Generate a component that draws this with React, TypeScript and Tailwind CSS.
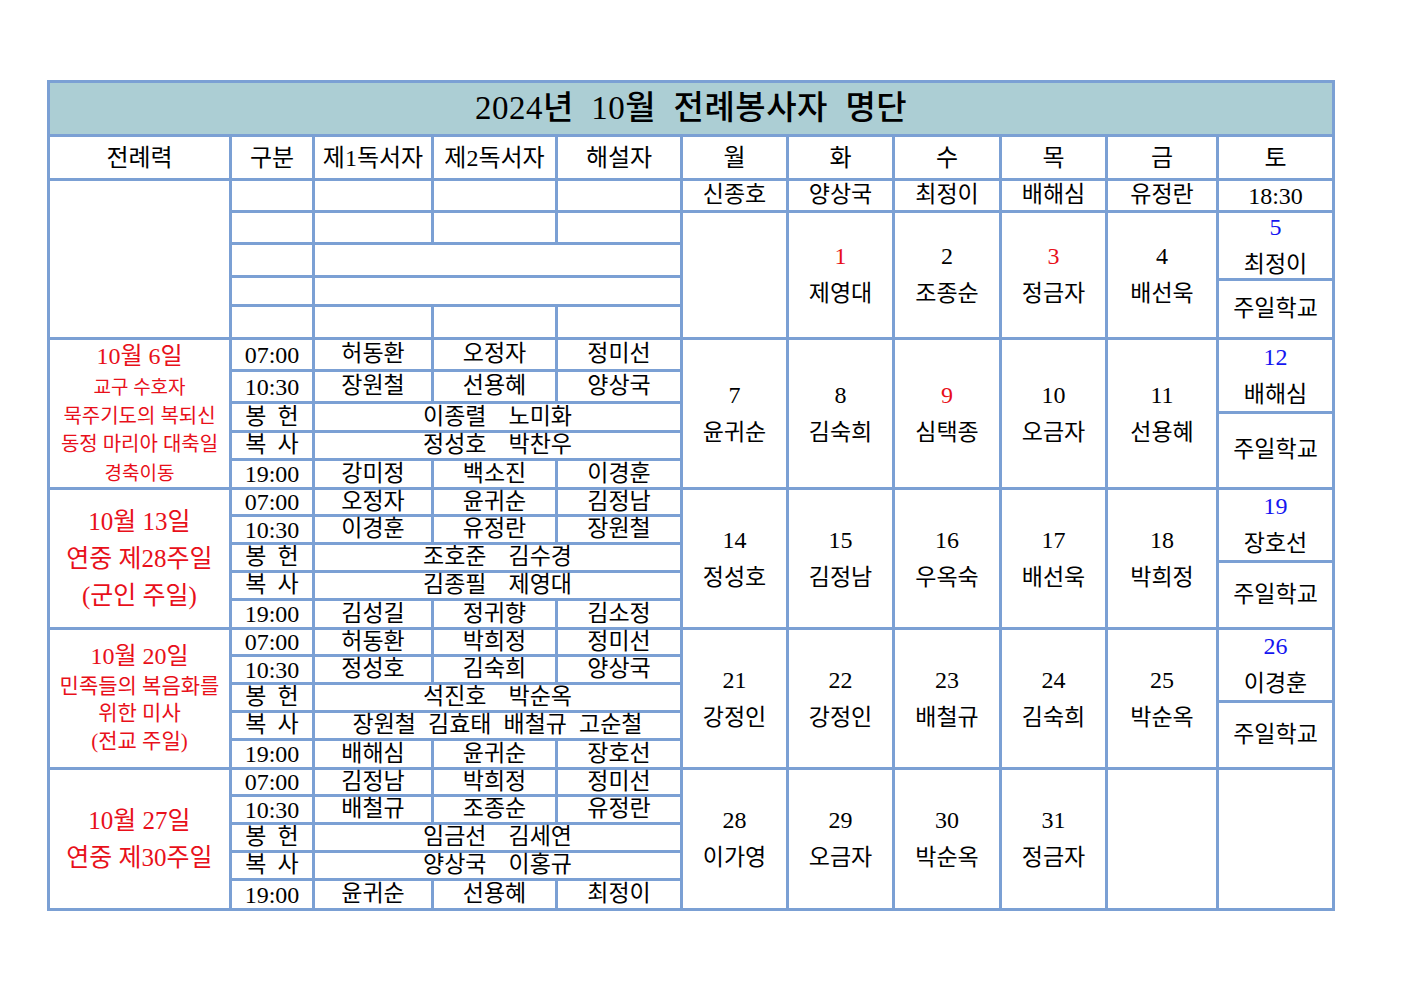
import type { ReactNode } from 'react';
import clsx from 'clsx';

type Day = { n?: string; name?: string; red?: boolean };

interface Section {
  label: ReactNode;
  rows: [string, string, string, string][];
  offer: string[];
  serve: string[];
  evening: [string, string, string];
  days: Day[];
  sat?: { n: string; name: string; topClass: string };
}

const RED = 'text-[#e8101a]';

function Cell({ className, children }: { className?: string; children?: ReactNode }) {
  return (
    <div className={clsx('bg-white flex items-center justify-center whitespace-nowrap', className)}>
      {children}
    </div>
  );
}

function DayCell({ day, span }: { day: Day; span: string }) {
  return (
    <Cell className={clsx(span, 'flex-col')}>
      {day.n && (
        <div className={clsx('text-[24px] leading-[37px]', day.red && RED)}>{day.n}</div>
      )}
      {day.name && <div className="text-[23px] leading-[37px]">{day.name}</div>}
    </Cell>
  );
}

function SatCell({ n, name, topClass, span }: { n: string; name: string; topClass: string; span: string }) {
  return (
    <div className={clsx(span, 'flex flex-col gap-[3px]')}>
      <Cell className={clsx(topClass, 'flex-col')}>
        <div className="text-[24px] leading-[37px] text-[#1515f0]">{n}</div>
        <div className="text-[23px] leading-[37px]">{name}</div>
      </Cell>
      <Cell className="flex-1 text-[23px]">주일학교</Cell>
    </div>
  );
}

const sections: Section[] = [
  {
    label: (
      <>
        <div className="text-[24px] leading-[36px]">10월 6일</div>
        <div className="text-[19px] leading-[28px]">교구 수호자</div>
        <div className="text-[20px] leading-[28px]">묵주기도의 복되신</div>
        <div className="text-[20px] leading-[28px]">동정 마리아 대축일</div>
        <div className="text-[19px] leading-[32px]">경축이동</div>
      </>
    ),
    rows: [
      ['07:00', '허동환', '오정자', '정미선'],
      ['10:30', '장원철', '선용혜', '양상국'],
    ],
    offer: ['이종렬', '노미화'],
    serve: ['정성호', '박찬우'],
    evening: ['강미정', '백소진', '이경훈'],
    days: [
      { n: '7', name: '윤귀순' },
      { n: '8', name: '김숙희' },
      { n: '9', name: '심택종', red: true },
      { n: '10', name: '오금자' },
      { n: '11', name: '선용혜' },
    ],
    sat: { n: '12', name: '배해심', topClass: 'h-[71px]' },
  },
  {
    label: (
      <>
        <div className="text-[25px] leading-[37px]">10월 13일</div>
        <div className="text-[25px] leading-[37px]">연중 제28주일</div>
        <div className="text-[25px] leading-[37px]">(군인 주일)</div>
      </>
    ),
    rows: [
      ['07:00', '오정자', '윤귀순', '김정남'],
      ['10:30', '이경훈', '유정란', '장원철'],
    ],
    offer: ['조호준', '김수경'],
    serve: ['김종필', '제영대'],
    evening: ['김성길', '정귀향', '김소정'],
    days: [
      { n: '14', name: '정성호' },
      { n: '15', name: '김정남' },
      { n: '16', name: '우옥숙' },
      { n: '17', name: '배선욱' },
      { n: '18', name: '박희정' },
    ],
    sat: { n: '19', name: '장호선', topClass: 'h-[70px]' },
  },
  {
    label: (
      <>
        <div className="text-[24px] leading-[31px]">10월 20일</div>
        <div className="text-[21px] leading-[28px]">민족들의 복음화를</div>
        <div className="text-[21px] leading-[27px]">위한 미사</div>
        <div className="text-[21px] leading-[29px]">(전교 주일)</div>
      </>
    ),
    rows: [
      ['07:00', '허동환', '박희정', '정미선'],
      ['10:30', '정성호', '김숙희', '양상국'],
    ],
    offer: ['석진호', '박순옥'],
    serve: ['장원철', '김효태', '배철규', '고순철'],
    evening: ['배해심', '윤귀순', '장호선'],
    days: [
      { n: '21', name: '강정인' },
      { n: '22', name: '강정인' },
      { n: '23', name: '배철규' },
      { n: '24', name: '김숙희' },
      { n: '25', name: '박순옥' },
    ],
    sat: { n: '26', name: '이경훈', topClass: 'h-[70px]' },
  },
  {
    label: (
      <>
        <div className="text-[25px] leading-[37px]">10월 27일</div>
        <div className="text-[25px] leading-[37px]">연중 제30주일</div>
      </>
    ),
    rows: [
      ['07:00', '김정남', '박희정', '정미선'],
      ['10:30', '배철규', '조종순', '유정란'],
    ],
    offer: ['임금선', '김세연'],
    serve: ['양상국', '이홍규'],
    evening: ['윤귀순', '선용혜', '최정이'],
    days: [
      { n: '28', name: '이가영' },
      { n: '29', name: '오금자' },
      { n: '30', name: '박순옥' },
      { n: '31', name: '정금자' },
      {},
    ],
  },
];

const headers = ['전례력', '구분', '제1독서자', '제2독서자', '해설자', '월', '화', '수', '목', '금', '토'];
const topNames = ['신종호', '양상국', '최정이', '배해심', '유정란'];
const topDays: Day[] = [
  {},
  { n: '1', name: '제영대', red: true },
  { n: '2', name: '조종순' },
  { n: '3', name: '정금자', red: true },
  { n: '4', name: '배선욱' },
];

function Role({ a, b }: { a: string; b: string }) {
  return (
    <Cell className="text-[23px] gap-[11px]">
      <span>{a}</span>
      <span>{b}</span>
    </Cell>
  );
}

function Names({ names, wide }: { names: string[]; wide?: boolean }) {
  return (
    <Cell className={clsx('col-span-3 text-[23px]', wide ? 'gap-[12px]' : 'gap-[22px]')}>
      {names.map((n, i) => (
        <span key={i}>{n}</span>
      ))}
    </Cell>
  );
}

function SectionRows({ s }: { s: Section }) {
  return (
    <>
      <Cell className={clsx('row-span-5 flex-col', RED)}>{s.label}</Cell>
      <Cell className="text-[24px]">{s.rows[0][0]}</Cell>
      <Cell className="text-[23px]">{s.rows[0][1]}</Cell>
      <Cell className="text-[23px]">{s.rows[0][2]}</Cell>
      <Cell className="text-[23px]">{s.rows[0][3]}</Cell>
      {s.days.map((d, i) => (
        <DayCell key={i} day={d} span="row-span-5" />
      ))}
      {s.sat ? (
        <SatCell {...s.sat} span="row-span-5" />
      ) : (
        <Cell className="row-span-5" />
      )}

      <Cell className="text-[24px]">{s.rows[1][0]}</Cell>
      <Cell className="text-[23px]">{s.rows[1][1]}</Cell>
      <Cell className="text-[23px]">{s.rows[1][2]}</Cell>
      <Cell className="text-[23px]">{s.rows[1][3]}</Cell>

      <Role a="봉" b="헌" />
      <Names names={s.offer} />

      <Role a="복" b="사" />
      <Names names={s.serve} wide={s.serve.length > 2} />

      <Cell className="text-[24px]">19:00</Cell>
      {s.evening.map((n, i) => (
        <Cell key={i} className="text-[23px]">
          {n}
        </Cell>
      ))}
    </>
  );
}

export default function App() {
  return (
    <div className="min-h-screen bg-white pt-[80px] pl-[47px] text-black font-['Liberation_Serif','Noto_Sans_CJK_KR',serif]">
      <div className="inline-grid bg-[#7ba0d4] p-[3px] gap-[3px] grid-cols-[179px_80px_116px_121px_122px_103px_103px_104px_103px_108px_113px] grid-rows-[51px_41px_29px_29px_30px_26px_30px_29px_29px_26px_25px_26px_24px_25px_25px_25px_26px_24px_25px_25px_25px_26px_24px_25px_25px_25px_27px]">
        {/* Title */}
        <div className="col-span-11 bg-[#acced4] flex items-center justify-center text-[33px] font-medium tracking-[0.5px]">
          2024년&nbsp; 10월&nbsp; 전례봉사자&nbsp; 명단
        </div>

        {/* Header */}
        {headers.map((h) => (
          <Cell key={h} className="text-[24px]">
            {h}
          </Cell>
        ))}

        {/* Top block */}
        <Cell className="row-span-5" />
        <Cell />
        <Cell />
        <Cell />
        <Cell />
        {topNames.map((n) => (
          <Cell key={n} className="text-[23px]">
            {n}
          </Cell>
        ))}
        <Cell className="text-[24px]">18:30</Cell>

        <Cell />
        <Cell />
        <Cell />
        <Cell />
        {topDays.map((d, i) => (
          <DayCell key={i} day={d} span="row-span-4" />
        ))}
        <SatCell n="5" name="최정이" topClass="h-[65px]" span="row-span-4" />

        <Cell />
        <Cell className="col-span-3" />
        <Cell />
        <Cell className="col-span-3" />
        <Cell />
        <Cell />
        <Cell />
        <Cell />

        {sections.map((s, i) => (
          <SectionRows key={i} s={s} />
        ))}
      </div>
    </div>
  );
}
